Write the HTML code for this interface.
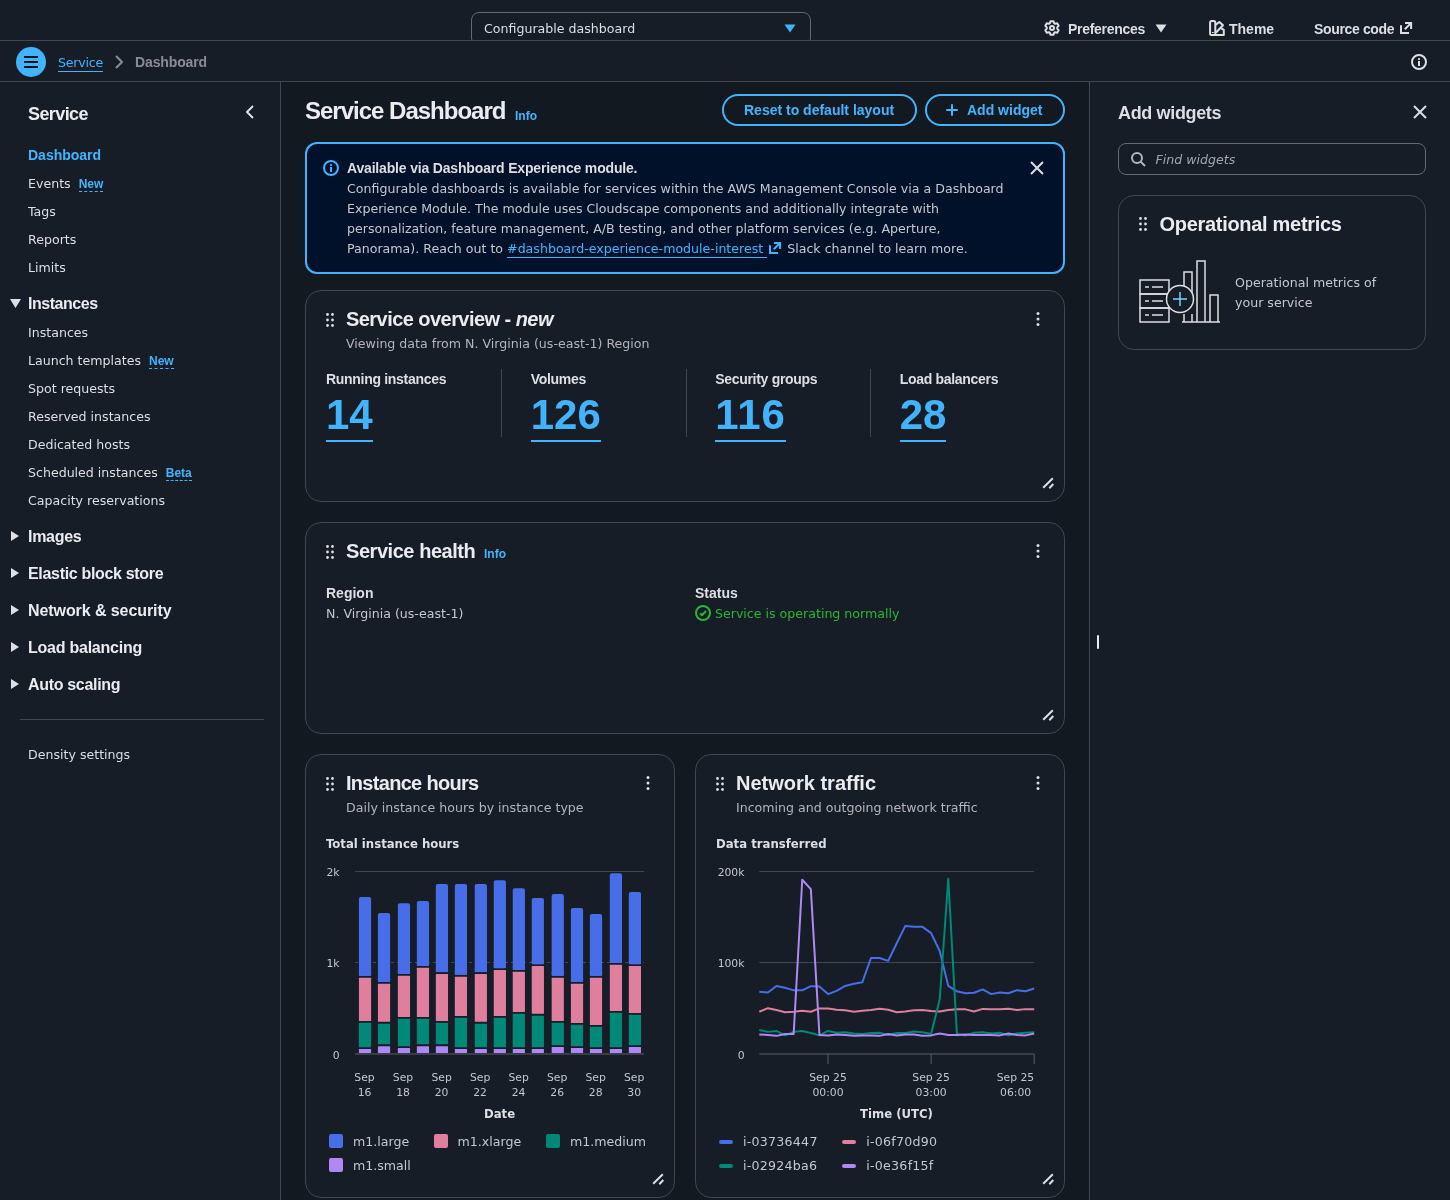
<!DOCTYPE html>
<html lang="en">
<head>
<meta charset="utf-8">
<title>Service Dashboard</title>
<style>
*{box-sizing:border-box;margin:0;padding:0}
html,body{width:1450px;height:1200px;overflow:hidden;background:#131920}
body{position:relative;font-family:"DejaVu Sans","Liberation Sans",sans-serif;font-size:12.6px;line-height:20px;color:#c6c6cd;-webkit-font-smoothing:antialiased}
.b{font-family:"Liberation Sans",sans-serif;font-weight:700;font-size:14px}
.cb{font-family:"DejaVu Sans Condensed","Liberation Sans",sans-serif;font-weight:700;font-size:13px}
a{color:#42b4ff;text-decoration:none}
.abs{position:absolute;white-space:nowrap}
svg{display:block;overflow:visible}
.ic{fill:none;stroke:currentColor;stroke-width:2;stroke-linejoin:round}
#app{position:absolute;left:0;top:0;width:1450px;height:1200px;will-change:transform}
/* top bar */
#topbar{position:absolute;left:0;top:0;width:1450px;height:41px;background:#161d26;border-bottom:1px solid #424650;overflow:hidden}
#sel{position:absolute;left:471px;top:12px;width:340px;height:34px;border:1px solid #656871;border-radius:8px;background:#161d26}
#toolbar{position:absolute;left:0;top:41px;width:1450px;height:41px;background:#161d26;border-bottom:1px solid #424650}
/* side nav */
#sidenav{position:absolute;left:0;top:82px;width:281px;height:1118px;background:#161d26;border-right:1px solid #424650}
#sidenav .it{position:absolute;left:28px;height:20px;color:#dedee3;white-space:nowrap}
#sidenav .sec{position:absolute;left:28px;height:20px;color:#ebebf0;font-size:16px;white-space:nowrap}
.badge{font-family:"Liberation Sans",sans-serif;font-weight:700;font-size:12px;color:#42b4ff;border-bottom:1px dashed #42b4ff;margin-left:8px;line-height:14px;display:inline-block}
.tri{position:absolute;fill:#dedee3}
/* main */
#main{position:absolute;left:281px;top:82px;width:808px;height:1118px;background:#131920}
.btn{position:absolute;top:94px;height:32px;border:2px solid #42b4ff;border-radius:20px;color:#42b4ff}
.card{position:absolute;background:#161d26;border:1px solid #424650;border-radius:16px}
.h2{position:absolute;font-size:20px;line-height:24px;color:#ebebf0;white-space:nowrap}
.desc{position:absolute;color:#b4b4bb;white-space:nowrap}
.lbl{position:absolute;color:#dedee3;white-space:nowrap}
.big{position:absolute;font-size:42px;line-height:48px;color:#42b4ff;white-space:nowrap;border-bottom:2px solid #42b4ff;height:51px}
.vd{position:absolute;top:369px;width:1px;height:68px;background:#424650}
.dots{position:absolute;fill:#dedee3}
/* panel */
#panel{position:absolute;left:1089px;top:82px;width:361px;height:1118px;background:#161d26;border-left:1px solid #424650}
.ax{font-size:10.8px;fill:#c6c6cd;font-family:"DejaVu Sans","Liberation Sans",sans-serif}
.leg{position:absolute;color:#c6c6cd;white-space:nowrap}
.sq{position:absolute;width:14px;height:14px;border-radius:2px}
.ln{position:absolute;width:14px;height:4px;border-radius:2px}
</style>
</head>
<body>
<div id="app">
<div id="topbar">
<div id="sel"><span class="abs" style="left:12px;top:6px;color:#dedee3">Configurable dashboard</span>
<svg class="abs" style="left:312px;top:11px" width="12" height="9" viewBox="0 0 12 9"><path d="M0.500 0.500h11l-5.500 8z" fill="#42b4ff"/></svg></div>
<svg class="abs ic" style="left:1044px;top:20px;color:#dedee3" width="16" height="16" viewBox="0 0 16 16"><path d="M10.07 3.12L9.46 1.15L6.54 1.15L5.93 3.12L4.81 3.77L2.80 3.32L1.34 5.84L2.74 7.35L2.74 8.65L1.34 10.16L2.80 12.68L4.81 12.23L5.93 12.88L6.54 14.85L9.46 14.85L10.07 12.88L11.19 12.23L13.20 12.68L14.66 10.16L13.26 8.65L13.26 7.35L14.66 5.84L13.20 3.32L11.19 3.77z"/><circle cx="8" cy="8" r="2"/></svg>
<span class="abs b" style="left:1068px;top:19px;color:#dedee3;letter-spacing:-0.3px">Preferences</span>
<svg class="abs" style="left:1155px;top:23.600px" width="12" height="9" viewBox="0 0 12 9"><path d="M0.500 0.500h11l-5.500 8z" fill="#dedee3"/></svg>
<svg class="abs ic" style="left:1209px;top:20px;color:#dedee3" width="16" height="16" viewBox="0 0 16 16"><path d="M2.600 1h2.200a1.500 1.500 0 0 1 1.500 1.500v11a1.500 1.500 0 0 1-1.500 1.500H2.600a1.500 1.500 0 0 1-1.500-1.500v-11A1.500 1.500 0 0 1 2.600 1z"/><path d="M3 12.500h1.800" style="stroke-width:1.200"/><path d="M6.800 4.600 10.400 2l3.600 3.300-7.200 7.400"/><path d="M12 8.200l2.800 1.700V15H4"/></svg>
<span class="abs b" style="left:1229px;top:19px;color:#dedee3">Theme</span>
<span class="abs b" style="left:1314px;top:19px;color:#dedee3;letter-spacing:-0.35px">Source code</span>
<svg class="abs ic" style="left:1398px;top:20px;color:#dedee3" width="16" height="16" viewBox="0 0 16 16"><path d="M7 3h6.100v6M13 3.100 6.800 9.300M3 5.200V13h8" style="stroke-linejoin:miter"/></svg>
</div>
<div id="toolbar">
<div class="abs" style="left:16px;top:6px;width:30px;height:30px;border-radius:15px;background:#42b4ff"></div>
<svg class="abs" style="left:23px;top:13px" width="16" height="16" viewBox="0 0 16 16"><path d="M1 3h14M1 8h14M1 13h14" stroke="#0f141a" stroke-width="2" fill="none"/></svg>
<a class="abs" style="left:58px;top:11px;border-bottom:1px solid #42b4ff;line-height:17px;top:13px;letter-spacing:-0.2px">Service</a>
<svg class="abs ic" style="left:111px;top:13px;color:#8c8c94" width="16" height="16" viewBox="0 0 16 16"><path d="M5 2l6 6-6 6"/></svg>
<span class="abs b" style="left:135px;top:11px;color:#8c8c94;letter-spacing:-0.13px">Dashboard</span>
<svg class="abs ic" style="left:1411px;top:13px;color:#dedee3" width="16" height="16" viewBox="0 0 16 16"><circle cx="8" cy="8" r="7"/><path d="M8 7v5"/><rect x="7" y="4.200" width="2" height="1.700" style="fill:currentColor;stroke:none"/></svg>
</div>
<nav id="sidenav"><div class="abs b" style="left:28px;top:21px;font-size:18px;line-height:22px;color:#ebebf0;letter-spacing:-0.6px">Service</div><svg class="abs ic" style="left:242px;top:22px;color:#dedee3" width="16" height="16" viewBox="0 0 16 16"><path d="M11 2 5 8l6 6"/></svg><div class="it b" style="top:63px;color:#42b4ff">Dashboard</div><div class="it" style="top:92px;">Events<span class="badge">New</span></div><div class="it" style="top:120px;">Tags</div><div class="it" style="top:148px;">Reports</div><div class="it" style="top:176px;">Limits</div><svg class="tri" style="left:10px;top:217px" width="11" height="9" viewBox="0 0 11 9"><path d="M0 0h11l-5.500 9z"/></svg><div class="sec b" style="top:212px;letter-spacing:-0.46px">Instances</div><div class="it" style="top:241px;">Instances</div><div class="it" style="top:269px;">Launch templates<span class="badge">New</span></div><div class="it" style="top:297px;">Spot requests</div><div class="it" style="top:325px;">Reserved instances</div><div class="it" style="top:353px;">Dedicated hosts</div><div class="it" style="top:381px;">Scheduled instances<span class="badge">Beta</span></div><div class="it" style="top:409px;">Capacity reservations</div><svg class="tri" style="left:11px;top:449px" width="8" height="10" viewBox="0 0 8 10"><path d="M0 0v10l8-5z"/></svg><div class="sec b" style="top:445px;letter-spacing:-0.3px">Images</div><svg class="tri" style="left:11px;top:486px" width="8" height="10" viewBox="0 0 8 10"><path d="M0 0v10l8-5z"/></svg><div class="sec b" style="top:482px;letter-spacing:-0.32px">Elastic block store</div><svg class="tri" style="left:11px;top:523px" width="8" height="10" viewBox="0 0 8 10"><path d="M0 0v10l8-5z"/></svg><div class="sec b" style="top:519px;letter-spacing:-0.08px">Network &amp; security</div><svg class="tri" style="left:11px;top:560px" width="8" height="10" viewBox="0 0 8 10"><path d="M0 0v10l8-5z"/></svg><div class="sec b" style="top:556px;letter-spacing:-0.24px">Load balancing</div><svg class="tri" style="left:11px;top:597px" width="8" height="10" viewBox="0 0 8 10"><path d="M0 0v10l8-5z"/></svg><div class="sec b" style="top:593px;letter-spacing:-0.32px">Auto scaling</div><div class="abs" style="left:20px;top:637px;width:244px;height:1px;background:#424650"></div><div class="it" style="top:663px;">Density settings</div></nav>
<main id="main"><h1 class="abs b" style="left:24px;top:14px;font-size:24px;line-height:30px;color:#ebebf0;letter-spacing:-1px">Service Dashboard</h1><a class="abs b" style="left:234px;top:24px;font-size:12px">Info</a><div class="btn b" style="left:441px;top:12px;width:195px"><span class="abs" style="left:20px;top:4px">Reset to default layout</span></div><div class="btn b" style="left:644px;top:12px;width:140px"><svg class="abs ic" style="left:16.5px;top:6.3px;" width="16" height="16" viewBox="0 0 16 16"><path d="M8 2.200v11.600M13.800 8H2.200"/></svg><span class="abs" style="left:40px;top:4px">Add widget</span></div><div class="abs" style="left:24px;top:60px;width:760px;height:132px;border:2px solid #42b4ff;border-radius:12px;background:#001129;color:#c6c6cd"><svg class="abs ic" style="left:16px;top:16px;color:#42b4ff" width="16" height="16" viewBox="0 0 16 16"><circle cx="8" cy="8" r="7"/><path d="M8 7v5"/><rect x="7" y="4.200" width="2" height="1.700" style="fill:currentColor;stroke:none"/></svg><div class="abs" style="left:40px;top:14px;white-space:normal;width:680px"><div class="b" style="color:#dedee3;letter-spacing:-0.17px">Available via Dashboard Experience module.</div><div style="position:relative;top:1px">Configurable dashboards is available for services within the AWS Management Console via a Dashboard<br>Experience Module. The module uses Cloudscape components and additionally integrate with<br>personalization, feature management, A/B testing, and other platform services (e.g. Aperture,<br>Panorama). Reach out to <a><span style="border-bottom:1px solid #42b4ff;line-height:17px;display:inline-block">#dashboard-experience-module-interest&nbsp;</span><svg class="ic" style="display:inline-block;vertical-align:-3px;color:#42b4ff" width="16" height="16" viewBox="0 0 16 16"><path d="M7 3h6.100v6M13 3.100 6.800 9.300M3 5.200V13h8" style="stroke-linejoin:miter"/></svg></a> Slack channel to learn more.</div></div><svg class="abs ic" style="left:722px;top:16px;color:#dedee3" width="16" height="16" viewBox="0 0 16 16"><path d="M2 2l12 12M14 2 2 14"/></svg></div><section class="card" style="left:24px;top:208px;width:760px;height:212px"><svg class="abs" style="left:19px;top:21px;color:#dedee3" width="10" height="16" viewBox="3 0 10 16"><g style="fill:currentColor;stroke:none"><circle cx="5.500" cy="2.500" r="1.400"/><circle cx="10.500" cy="2.500" r="1.400"/><circle cx="5.500" cy="8" r="1.400"/><circle cx="10.500" cy="8" r="1.400"/><circle cx="5.500" cy="13.500" r="1.400"/><circle cx="10.500" cy="13.500" r="1.400"/></g></svg><h2 class="h2 b" style="left:40px;top:16px;letter-spacing:-0.55px">Service overview - <i>new</i></h2><div class="desc" style="left:40px;top:43px">Viewing data from N. Virginia (us-east-1) Region</div><svg class="abs" style="left:724px;top:20px;color:#dedee3" width="16" height="16" viewBox="0 0 16 16"><g style="fill:currentColor;stroke:none"><circle cx="8" cy="2.500" r="1.500"/><circle cx="8" cy="8" r="1.500"/><circle cx="8" cy="13.500" r="1.500"/></g></svg><div class="lbl b" style="left:20px;top:78px;letter-spacing:-0.3px">Running instances</div><a class="big b" style="left:20px;top:100px">14</a><div class="lbl b" style="left:224.70000000000005px;top:78px;letter-spacing:-0.3px">Volumes</div><a class="big b" style="left:224.70000000000005px;top:100px">126</a><div class="vd" style="left:195px;top:78px"></div><div class="lbl b" style="left:409.20000000000005px;top:78px;letter-spacing:-0.3px">Security groups</div><a class="big b" style="left:409.20000000000005px;top:100px;letter-spacing:1px">116</a><div class="vd" style="left:380px;top:78px"></div><div class="lbl b" style="left:593.7px;top:78px;letter-spacing:-0.3px">Load balancers</div><a class="big b" style="left:593.7px;top:100px">28</a><div class="vd" style="left:564px;top:78px"></div><svg class="abs ic" style="left:734px;top:184px;color:#dedee3" width="16" height="16" viewBox="0 0 16 16"><path d="M12.800 3.200 3.200 12.800M13.300 9 9.300 13.200" style="stroke-linecap:butt"/></svg></section><section class="card" style="left:24px;top:440px;width:760px;height:212px"><svg class="abs" style="left:19px;top:21px;color:#dedee3" width="10" height="16" viewBox="3 0 10 16"><g style="fill:currentColor;stroke:none"><circle cx="5.500" cy="2.500" r="1.400"/><circle cx="10.500" cy="2.500" r="1.400"/><circle cx="5.500" cy="8" r="1.400"/><circle cx="10.500" cy="8" r="1.400"/><circle cx="5.500" cy="13.500" r="1.400"/><circle cx="10.500" cy="13.500" r="1.400"/></g></svg><h2 class="h2 b" style="left:40px;top:16px;letter-spacing:-0.45px">Service health</h2><a class="abs b" style="left:178px;top:21px;font-size:12px">Info</a><svg class="abs" style="left:724px;top:20px;color:#dedee3" width="16" height="16" viewBox="0 0 16 16"><g style="fill:currentColor;stroke:none"><circle cx="8" cy="2.500" r="1.500"/><circle cx="8" cy="8" r="1.500"/><circle cx="8" cy="13.500" r="1.500"/></g></svg><div class="lbl b" style="left:20px;top:60px">Region</div><div class="abs" style="left:20px;top:81px">N. Virginia (us-east-1)</div><div class="lbl b" style="left:389px;top:60px">Status</div><svg class="abs ic" style="left:389px;top:82px;color:#2bb534" width="16" height="16" viewBox="0 0 16 16"><circle cx="8" cy="8" r="7"/><path d="M5 8.200l2 2 4-4.200"/></svg><div class="abs" style="left:409px;top:81px;color:#2bb534">Service is operating normally</div><svg class="abs ic" style="left:734px;top:184px;color:#dedee3" width="16" height="16" viewBox="0 0 16 16"><path d="M12.800 3.200 3.200 12.800M13.300 9 9.300 13.200" style="stroke-linecap:butt"/></svg></section><section class="card" style="left:24px;top:672px;width:370px;height:444px"><svg class="abs" style="left:19px;top:21px;color:#dedee3" width="10" height="16" viewBox="3 0 10 16"><g style="fill:currentColor;stroke:none"><circle cx="5.500" cy="2.500" r="1.400"/><circle cx="10.500" cy="2.500" r="1.400"/><circle cx="5.500" cy="8" r="1.400"/><circle cx="10.500" cy="8" r="1.400"/><circle cx="5.500" cy="13.500" r="1.400"/><circle cx="10.500" cy="13.500" r="1.400"/></g></svg><h2 class="h2 b" style="left:40px;top:16px;letter-spacing:-0.7px">Instance hours</h2><div class="desc" style="left:40px;top:43px">Daily instance hours by instance type</div><svg class="abs" style="left:334px;top:20px;color:#dedee3" width="16" height="16" viewBox="0 0 16 16"><g style="fill:currentColor;stroke:none"><circle cx="8" cy="2.500" r="1.500"/><circle cx="8" cy="8" r="1.500"/><circle cx="8" cy="13.500" r="1.500"/></g></svg><div class="lbl cb" style="left:20px;top:79px">Total instance hours</div><svg class="abs ic" style="left:344px;top:416px;color:#dedee3" width="16" height="16" viewBox="0 0 16 16"><path d="M12.800 3.200 3.200 12.800M13.300 9 9.300 13.200" style="stroke-linecap:butt"/></svg><svg class="abs" style="left:0;top:0" width="368" height="442" viewBox="0 0 368 442"><line x1="49" x2="338" y1="116.5" y2="116.5" stroke="#424650"/><line x1="49" x2="338" y1="207.5" y2="207.5" stroke="#424650" stroke-dasharray="3 3"/><rect x="52.92" y="142.05" width="12.2" height="78.82" rx="2" fill="#486de8"/><rect x="52.92" y="216.87" width="12.2" height="4" fill="#486de8"/><rect x="52.92" y="222.67" width="12.2" height="43.22" rx="0.5" fill="#e07f9d"/><rect x="52.92" y="267.69" width="12.2" height="24.46" rx="0.5" fill="#018977"/><rect x="52.92" y="293.96" width="12.2" height="4.04" rx="0.5" fill="#b088f5"/><rect x="71.92" y="157.99" width="12.2" height="68.98" rx="2" fill="#486de8"/><rect x="71.92" y="222.97" width="12.2" height="4" fill="#486de8"/><rect x="71.92" y="228.77" width="12.2" height="38.06" rx="0.5" fill="#e07f9d"/><rect x="71.92" y="268.63" width="12.2" height="20.71" rx="0.5" fill="#018977"/><rect x="71.92" y="291.14" width="12.2" height="6.86" rx="0.5" fill="#b088f5"/><rect x="91.85" y="148.14" width="12.2" height="70.85" rx="2" fill="#486de8"/><rect x="91.85" y="215.00" width="12.2" height="4" fill="#486de8"/><rect x="91.85" y="220.80" width="12.2" height="41.11" rx="0.5" fill="#e07f9d"/><rect x="91.85" y="263.71" width="12.2" height="27.51" rx="0.5" fill="#018977"/><rect x="91.85" y="293.02" width="12.2" height="4.98" rx="0.5" fill="#b088f5"/><rect x="110.84" y="146.03" width="12.2" height="64.99" rx="2" fill="#486de8"/><rect x="110.84" y="207.02" width="12.2" height="4" fill="#486de8"/><rect x="110.84" y="212.82" width="12.2" height="49.08" rx="0.5" fill="#e07f9d"/><rect x="110.84" y="263.71" width="12.2" height="25.63" rx="0.5" fill="#018977"/><rect x="110.84" y="291.14" width="12.2" height="6.86" rx="0.5" fill="#b088f5"/><rect x="129.83" y="128.92" width="12.2" height="88.20" rx="2" fill="#486de8"/><rect x="129.83" y="213.12" width="12.2" height="4" fill="#486de8"/><rect x="129.83" y="218.92" width="12.2" height="46.97" rx="0.5" fill="#e07f9d"/><rect x="129.83" y="267.69" width="12.2" height="21.65" rx="0.5" fill="#018977"/><rect x="129.83" y="291.14" width="12.2" height="6.86" rx="0.5" fill="#b088f5"/><rect x="148.83" y="128.92" width="12.2" height="91.02" rx="2" fill="#486de8"/><rect x="148.83" y="215.93" width="12.2" height="4" fill="#486de8"/><rect x="148.83" y="221.73" width="12.2" height="39.23" rx="0.5" fill="#e07f9d"/><rect x="148.83" y="262.77" width="12.2" height="29.39" rx="0.5" fill="#018977"/><rect x="148.83" y="293.96" width="12.2" height="4.04" rx="0.5" fill="#b088f5"/><rect x="168.76" y="128.92" width="12.2" height="88.20" rx="2" fill="#486de8"/><rect x="168.76" y="213.12" width="12.2" height="4" fill="#486de8"/><rect x="168.76" y="218.92" width="12.2" height="47.91" rx="0.5" fill="#e07f9d"/><rect x="168.76" y="268.63" width="12.2" height="23.52" rx="0.5" fill="#018977"/><rect x="168.76" y="293.96" width="12.2" height="4.04" rx="0.5" fill="#b088f5"/><rect x="187.75" y="125.17" width="12.2" height="87.97" rx="2" fill="#486de8"/><rect x="187.75" y="209.13" width="12.2" height="4" fill="#486de8"/><rect x="187.75" y="214.93" width="12.2" height="46.03" rx="0.5" fill="#e07f9d"/><rect x="187.75" y="262.77" width="12.2" height="29.39" rx="0.5" fill="#018977"/><rect x="187.75" y="293.96" width="12.2" height="4.04" rx="0.5" fill="#b088f5"/><rect x="206.75" y="133.14" width="12.2" height="81.87" rx="2" fill="#486de8"/><rect x="206.75" y="211.01" width="12.2" height="4" fill="#486de8"/><rect x="206.75" y="216.81" width="12.2" height="40.17" rx="0.5" fill="#e07f9d"/><rect x="206.75" y="258.78" width="12.2" height="33.37" rx="0.5" fill="#018977"/><rect x="206.75" y="293.96" width="12.2" height="4.04" rx="0.5" fill="#b088f5"/><rect x="225.74" y="142.99" width="12.2" height="66.16" rx="2" fill="#486de8"/><rect x="225.74" y="205.15" width="12.2" height="4" fill="#486de8"/><rect x="225.74" y="210.95" width="12.2" height="47.91" rx="0.5" fill="#e07f9d"/><rect x="225.74" y="260.66" width="12.2" height="31.50" rx="0.5" fill="#018977"/><rect x="225.74" y="293.96" width="12.2" height="4.04" rx="0.5" fill="#b088f5"/><rect x="245.67" y="139.00" width="12.2" height="81.87" rx="2" fill="#486de8"/><rect x="245.67" y="216.87" width="12.2" height="4" fill="#486de8"/><rect x="245.67" y="222.67" width="12.2" height="43.22" rx="0.5" fill="#e07f9d"/><rect x="245.67" y="267.69" width="12.2" height="22.59" rx="0.5" fill="#018977"/><rect x="245.67" y="292.08" width="12.2" height="5.92" rx="0.5" fill="#b088f5"/><rect x="264.90" y="153.07" width="12.2" height="73.90" rx="2" fill="#486de8"/><rect x="264.90" y="222.97" width="12.2" height="4" fill="#486de8"/><rect x="264.90" y="228.77" width="12.2" height="39.23" rx="0.5" fill="#e07f9d"/><rect x="264.90" y="269.80" width="12.2" height="21.41" rx="0.5" fill="#018977"/><rect x="264.90" y="293.02" width="12.2" height="4.98" rx="0.5" fill="#b088f5"/><rect x="283.89" y="158.93" width="12.2" height="61.94" rx="2" fill="#486de8"/><rect x="283.89" y="216.87" width="12.2" height="4" fill="#486de8"/><rect x="283.89" y="222.67" width="12.2" height="47.21" rx="0.5" fill="#e07f9d"/><rect x="283.89" y="271.68" width="12.2" height="20.48" rx="0.5" fill="#018977"/><rect x="283.89" y="293.96" width="12.2" height="4.04" rx="0.5" fill="#b088f5"/><rect x="303.82" y="118.13" width="12.2" height="89.84" rx="2" fill="#486de8"/><rect x="303.82" y="203.98" width="12.2" height="4" fill="#486de8"/><rect x="303.82" y="209.78" width="12.2" height="46.27" rx="0.5" fill="#e07f9d"/><rect x="303.82" y="257.85" width="12.2" height="34.31" rx="0.5" fill="#018977"/><rect x="303.82" y="293.96" width="12.2" height="4.04" rx="0.5" fill="#b088f5"/><rect x="322.81" y="137.12" width="12.2" height="72.02" rx="2" fill="#486de8"/><rect x="322.81" y="205.15" width="12.2" height="4" fill="#486de8"/><rect x="322.81" y="210.95" width="12.2" height="46.97" rx="0.5" fill="#e07f9d"/><rect x="322.81" y="259.72" width="12.2" height="30.56" rx="0.5" fill="#018977"/><rect x="322.81" y="292.08" width="12.2" height="5.92" rx="0.5" fill="#b088f5"/><line x1="49" x2="338" y1="299.0" y2="299.0" stroke="#5a5f6b"/><text class="ax" x="33.5" y="121.3" text-anchor="end">2k</text><text class="ax" x="33.5" y="212.3" text-anchor="end">1k</text><text class="ax" x="33.5" y="303.8" text-anchor="end">0</text><text class="ax" x="58.5" y="326" text-anchor="middle">Sep</text><text class="ax" x="58.5" y="341" text-anchor="middle">16</text><text class="ax" x="97.0" y="326" text-anchor="middle">Sep</text><text class="ax" x="97.0" y="341" text-anchor="middle">18</text><text class="ax" x="135.6" y="326" text-anchor="middle">Sep</text><text class="ax" x="135.6" y="341" text-anchor="middle">20</text><text class="ax" x="174.1" y="326" text-anchor="middle">Sep</text><text class="ax" x="174.1" y="341" text-anchor="middle">22</text><text class="ax" x="212.6" y="326" text-anchor="middle">Sep</text><text class="ax" x="212.6" y="341" text-anchor="middle">24</text><text class="ax" x="251.2" y="326" text-anchor="middle">Sep</text><text class="ax" x="251.2" y="341" text-anchor="middle">26</text><text class="ax" x="289.7" y="326" text-anchor="middle">Sep</text><text class="ax" x="289.7" y="341" text-anchor="middle">28</text><text class="ax" x="328.2" y="326" text-anchor="middle">Sep</text><text class="ax" x="328.2" y="341" text-anchor="middle">30</text></svg><div class="lbl cb" style="left:178px;top:349px">Date</div><div class="sq" style="left:23px;top:379px;background:#486de8"></div><div class="leg" style="left:47px;top:377px">m1.large</div><div class="sq" style="left:127.5px;top:379px;background:#e07f9d"></div><div class="leg" style="left:151.5px;top:377px">m1.xlarge</div><div class="sq" style="left:240px;top:379px;background:#018977"></div><div class="leg" style="left:264px;top:377px">m1.medium</div><div class="sq" style="left:23px;top:403px;background:#b088f5"></div><div class="leg" style="left:47px;top:401px">m1.small</div></section><section class="card" style="left:414px;top:672px;width:370px;height:444px"><svg class="abs" style="left:19px;top:21px;color:#dedee3" width="10" height="16" viewBox="3 0 10 16"><g style="fill:currentColor;stroke:none"><circle cx="5.500" cy="2.500" r="1.400"/><circle cx="10.500" cy="2.500" r="1.400"/><circle cx="5.500" cy="8" r="1.400"/><circle cx="10.500" cy="8" r="1.400"/><circle cx="5.500" cy="13.500" r="1.400"/><circle cx="10.500" cy="13.500" r="1.400"/></g></svg><h2 class="h2 b" style="left:40px;top:16px;letter-spacing:0px">Network traffic</h2><div class="desc" style="left:40px;top:43px">Incoming and outgoing network traffic</div><svg class="abs" style="left:334px;top:20px;color:#dedee3" width="16" height="16" viewBox="0 0 16 16"><g style="fill:currentColor;stroke:none"><circle cx="8" cy="2.500" r="1.500"/><circle cx="8" cy="8" r="1.500"/><circle cx="8" cy="13.500" r="1.500"/></g></svg><div class="lbl cb" style="left:20px;top:79px">Data transferred</div><svg class="abs ic" style="left:344px;top:416px;color:#dedee3" width="16" height="16" viewBox="0 0 16 16"><path d="M12.800 3.200 3.200 12.800M13.300 9 9.300 13.200" style="stroke-linecap:butt"/></svg><svg class="abs" style="left:0;top:0" width="368" height="442" viewBox="0 0 368 442"><line x1="63.3" x2="338.2" y1="116.5" y2="116.5" stroke="#424650"/><line x1="63.3" x2="338.2" y1="207.5" y2="207.5" stroke="#424650"/><line x1="63.3" x2="338.2" y1="299.0" y2="299.0" stroke="#5a5f6b"/><line x1="132.02" x2="132.02" y1="299.0" y2="309.0" stroke="#5a5f6b"/><line x1="235.11" x2="235.11" y1="299.0" y2="309.0" stroke="#5a5f6b"/><line x1="338.20" x2="338.20" y1="299.0" y2="309.0" stroke="#5a5f6b"/><polyline points="63.30,236.78 71.89,237.48 80.48,230.92 89.07,232.79 97.66,235.37 106.25,235.37 114.84,231.15 123.43,231.62 132.02,239.12 140.62,235.84 149.21,230.92 157.80,228.81 166.39,227.17 174.98,203.01 183.57,203.01 192.16,205.83 200.75,188.24 209.34,170.89 217.93,171.83 226.52,171.83 235.11,178.16 243.70,195.98 252.29,230.92 260.88,236.31 269.48,238.19 278.07,237.72 286.66,234.43 295.25,239.12 303.84,237.48 312.43,238.19 321.02,235.14 329.61,236.31 338.20,233.50" fill="none" stroke="#486de8" stroke-width="2" stroke-linejoin="round"/><polyline points="63.30,256.71 71.89,253.19 80.48,255.07 89.07,257.18 97.66,256.71 106.25,255.77 114.84,256.71 123.43,253.43 132.02,253.43 140.62,254.83 149.21,255.30 157.80,256.71 166.39,255.77 174.98,255.07 183.57,253.66 192.16,254.83 200.75,257.18 209.34,256.48 217.93,255.30 226.52,255.07 235.11,256.01 243.70,256.48 252.29,255.07 260.88,254.37 269.48,254.37 278.07,256.48 286.66,253.90 295.25,254.37 303.84,254.37 312.43,253.66 321.02,255.07 329.61,254.13 338.20,254.13" fill="none" stroke="#e07f9d" stroke-width="2" stroke-linejoin="round"/><polyline points="63.30,275.00 71.89,276.88 80.48,275.94 89.07,280.39 97.66,276.88 106.25,275.94 114.84,278.05 123.43,280.39 132.02,275.94 140.62,277.81 149.21,277.35 157.80,278.52 166.39,278.99 174.98,278.05 183.57,277.81 192.16,279.92 200.75,278.05 209.34,278.05 217.93,276.41 226.52,277.35 235.11,278.99 243.70,244.52 252.29,123.76 260.88,278.99 269.48,280.39 278.07,277.81 286.66,277.35 295.25,278.52 303.84,277.81 312.43,280.39 321.02,278.52 329.61,277.81 338.20,277.35" fill="none" stroke="#018977" stroke-width="2" stroke-linejoin="round"/><polyline points="63.30,279.46 71.89,279.92 80.48,280.86 89.07,278.99 97.66,278.99 106.25,124.70 114.84,134.08 123.43,279.92 132.02,280.39 140.62,279.46 149.21,279.92 157.80,280.86 166.39,280.39 174.98,280.39 183.57,280.86 192.16,278.99 200.75,280.39 209.34,279.46 217.93,279.46 226.52,280.86 235.11,280.39 243.70,278.52 252.29,279.92 260.88,279.92 269.48,279.46 278.07,279.92 286.66,279.92 295.25,279.92 303.84,280.39 312.43,278.52 321.02,279.92 329.61,280.39 338.20,278.52" fill="none" stroke="#b088f5" stroke-width="2" stroke-linejoin="round"/><text class="ax" x="48.5" y="121.3" text-anchor="end">200k</text><text class="ax" x="48.5" y="212.3" text-anchor="end">100k</text><text class="ax" x="48.5" y="303.8" text-anchor="end">0</text><text class="ax" x="132.0" y="326" text-anchor="middle">Sep 25</text><text class="ax" x="132.0" y="341" text-anchor="middle">00:00</text><text class="ax" x="235.1" y="326" text-anchor="middle">Sep 25</text><text class="ax" x="235.1" y="341" text-anchor="middle">03:00</text><text class="ax" x="338.2" y="326" text-anchor="end">Sep 25</text><text class="ax" x="335.2" y="341" text-anchor="end">06:00</text></svg><div class="lbl cb" style="left:164px;top:349px">Time (UTC)</div><div class="ln" style="left:23px;top:385px;background:#486de8"></div><div class="leg" style="left:47px;top:377px;letter-spacing:0.25px">i-03736447</div><div class="ln" style="left:146.29999999999995px;top:385px;background:#e07f9d"></div><div class="leg" style="left:170.29999999999995px;top:377px;letter-spacing:0.25px">i-06f70d90</div><div class="ln" style="left:23px;top:409px;background:#018977"></div><div class="leg" style="left:47px;top:401px;letter-spacing:0.25px">i-02924ba6</div><div class="ln" style="left:146.29999999999995px;top:409px;background:#b088f5"></div><div class="leg" style="left:170.29999999999995px;top:401px;letter-spacing:0.25px">i-0e36f15f</div></section></main>
<aside id="panel"><div class="abs" style="left:7px;top:553px;width:2px;height:14px;border-radius:1px;background:#ebebf0"></div><h2 class="abs b" style="left:28px;top:20px;font-size:18px;line-height:22px;color:#dedee3;letter-spacing:-0.35px">Add widgets</h2><svg class="abs ic" style="left:322px;top:21.599999999999994px;color:#dedee3" width="16" height="16" viewBox="0 0 16 16"><path d="M2 2l12 12M14 2 2 14"/></svg><div class="abs" style="left:28px;top:61px;width:308px;height:32px;border:1px solid #656871;border-radius:8px"><svg class="abs ic" style="left:11px;top:7px;color:#b4b4bb" width="16" height="16" viewBox="0 0 16 16"><circle cx="7" cy="7" r="5"/><path d="M15 15l-4.400-4.400"/></svg><span class="abs" style="left:36.500px;top:6px;font-style:italic;color:#a4a4ad">Find widgets</span></div><div class="card" style="left:28px;top:113px;width:308px;height:155px"><svg class="abs" style="left:19px;top:20px;color:#dedee3" width="10" height="16" viewBox="3 0 10 16"><g style="fill:currentColor;stroke:none"><circle cx="5.500" cy="2.500" r="1.400"/><circle cx="10.500" cy="2.500" r="1.400"/><circle cx="5.500" cy="8" r="1.400"/><circle cx="10.500" cy="8" r="1.400"/><circle cx="5.500" cy="13.500" r="1.400"/><circle cx="10.500" cy="13.500" r="1.400"/></g></svg><h3 class="h2 b" style="left:40.500px;top:16px;letter-spacing:-0.3px">Operational metrics</h3><svg class="abs" style="left:20px;top:64px" width="82" height="64" viewBox="0 0 82 64" fill="none" stroke="#dedee3" stroke-width="1.500">
<rect x="1" y="20" width="29" height="14"/><rect x="1" y="34" width="29" height="14"/><rect x="1" y="48" width="29" height="14"/>
<path d="M6 27h4M13 27h11M6 41h4M13 41h11M6 55h4M13 55h11"/>
<path d="M45 32V12h8v26M58 62V1h8v61M71 62V35h8v27M43 62h38M45 54v8h8v-8"/>
<circle cx="41" cy="39" r="13.500" fill="#161d26"/><path d="M41 32v14M34 39h14" stroke="#7fd1ff"/></svg><div class="abs" style="left:116px;top:77px;white-space:normal;width:170px">Operational metrics of<br>your service</div></div></aside>
</div>
</body>
</html>
